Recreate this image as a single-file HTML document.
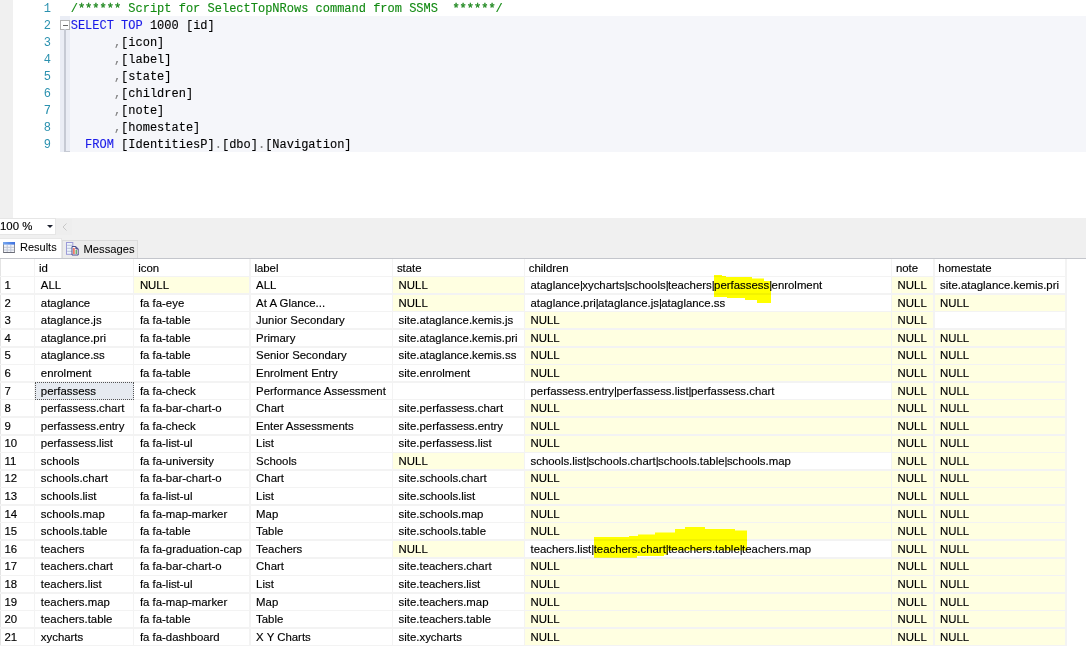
<!DOCTYPE html>
<html><head><meta charset="utf-8">
<style>
*{margin:0;padding:0;box-sizing:border-box}
html,body{width:1086px;height:649px;overflow:hidden;background:#fff;position:relative}
body{font-family:"Liberation Sans",sans-serif}
.a{position:absolute}
.code{position:absolute;font-family:"Liberation Mono",monospace;font-size:12px;white-space:pre;left:70.7px;line-height:17px;height:17px;-webkit-text-stroke:0.12px currentColor;color:#000}
.ln{position:absolute;font-family:"Liberation Mono",monospace;font-size:12px;color:#2b91af;width:20px;text-align:right;left:31px;line-height:17px}
.cm{color:#128a12}.kw{color:#1a1ae8}.gr{color:#808080}
.t{position:absolute;font-size:11.4px;white-space:pre;color:#000;line-height:17px;-webkit-text-stroke:0.15px #000}
.vl{position:absolute;width:1.6px;background:#f3f3f3}
.hl{position:absolute;height:1.6px;background:#f3f3f3}
.y{position:absolute;background:#ffffe1}
.p{letter-spacing:-0.6px}
</style></head><body>

<div class="a" style="left:0;top:0;width:13px;height:218px;background:#f0f0f0"></div>
<div class="a" style="left:60px;top:16px;width:1026px;height:136px;background:#f5f6fa"></div>
<div class="a" style="left:60px;top:16px;width:9.5px;height:136px;background:#eaedf5"></div>
<div class="a" style="left:60.2px;top:20px;width:9.4px;height:9.6px;border:1px solid #b4b4b4;background:#fff"></div>
<div class="a" style="left:62.5px;top:24.6px;width:5px;height:1.2px;background:#666"></div>
<div class="a" style="left:64px;top:29px;width:1.5px;height:122px;background:#c6cad4"></div>
<div class="a" style="left:64px;top:150.5px;width:5.5px;height:1.3px;background:#c6cad4"></div>
<div class="ln" style="top:1px">1</div>
<div class="ln" style="top:18px">2</div>
<div class="ln" style="top:35px">3</div>
<div class="ln" style="top:52px">4</div>
<div class="ln" style="top:69px">5</div>
<div class="ln" style="top:86px">6</div>
<div class="ln" style="top:103px">7</div>
<div class="ln" style="top:120px">8</div>
<div class="ln" style="top:137px">9</div>
<div class="code" style="top:1px"><span class="cm">/<span style="position:relative;top:-0.3px;-webkit-text-stroke:0.4px #2a8a2a">******</span> Script for SelectTopNRows command from SSMS  <span style="position:relative;top:-0.3px;-webkit-text-stroke:0.4px #2a8a2a">******</span>/</span></div>
<div class="code" style="top:18px"><span class="kw">SELECT</span> <span class="kw">TOP</span> 1000 [id]</div>
<div class="code" style="top:35px">      <span class="gr">,</span>[icon]</div>
<div class="code" style="top:52px">      <span class="gr">,</span>[label]</div>
<div class="code" style="top:69px">      <span class="gr">,</span>[state]</div>
<div class="code" style="top:86px">      <span class="gr">,</span>[children]</div>
<div class="code" style="top:103px">      <span class="gr">,</span>[note]</div>
<div class="code" style="top:120px">      <span class="gr">,</span>[homestate]</div>
<div class="code" style="top:137px">  <span class="kw">FROM</span> [IdentitiesP]<span class="gr">.</span>[dbo]<span class="gr">.</span>[Navigation]</div>
<div class="a" style="left:0;top:218px;width:1086px;height:40px;background:#f0f0f0"></div>
<div class="a" style="left:-1px;top:217.8px;width:57px;height:16.8px;background:#fff;border:1px solid #e6e6e6"></div>
<div class="t" style="left:0px;top:217.5px;font-size:11.4px">100 %</div>
<div class="a" style="left:46.6px;top:224.8px;width:0;height:0;border-left:3px solid transparent;border-right:3px solid transparent;border-top:3.2px solid #1e2230"></div>
<div class="a" style="left:56px;top:218.5px;width:16px;height:16px;background:#eeeeee"></div>
<svg class="a" style="left:60px;top:221px" width="10" height="12"><path d="M6.5 2.5 L3 6 L6.5 9.5" stroke="#c8c8c8" stroke-width="1" fill="none"/></svg>
<div class="a" style="left:0;top:237.8px;width:61.5px;height:20px;background:#fff;border-top:1px solid #e8e8e8;border-right:1px solid #e8e8e8"></div>
<div class="a" style="left:62px;top:240px;width:75.5px;height:18px;background:#ececec;border:1px solid #dcdcdc;border-bottom:none"></div>
<div class="t" style="left:20px;top:238.5px;font-size:11px;-webkit-text-stroke:0.05px #000">Results</div>
<div class="t" style="left:83.5px;top:240.5px;font-size:11.2px;-webkit-text-stroke:0.05px #000">Messages</div>
<svg class="a" style="left:3px;top:242px" width="12" height="11" viewBox="0 0 12 11">
<defs><linearGradient id="gb" x1="0" y1="0" x2="1" y2="0"><stop offset="0" stop-color="#78a8ee"/><stop offset="1" stop-color="#3b6fe0"/></linearGradient></defs>
<rect x="0.5" y="0.5" width="11" height="10" fill="#f2f4f8" stroke="#8a8c94"/>
<rect x="0" y="0" width="12" height="2.6" fill="url(#gb)"/>
<path d="M1 5.3H11M1 8H11M4.2 3V10M7.8 3V10" stroke="#c0c6d6" stroke-width="1"/>
<path d="M0.5 10.5H11.5" stroke="#6a6c78" stroke-width="1"/>
</svg>
<svg class="a" style="left:66px;top:242px" width="13" height="14" viewBox="0 0 13 14">
<rect x="0.5" y="0.5" width="6.3" height="11.8" fill="#eef4fc" stroke="#9c9ad8" stroke-width="1"/>
<path d="M1.2 3.3H6.2M1.2 6.3H6.2M1.2 9.3H6.2" stroke="#a8b4cc" stroke-width="0.8"/>
<path d="M6 4.5H9.8L12.2 7V13H6Z" fill="#fafafa" stroke="#4a4c8c" stroke-width="1"/>
<path d="M9.8 4.5V7H12.2" fill="#5a5a9a" stroke="#4a4c8c" stroke-width="0.8"/>
<rect x="7" y="6" width="1.8" height="6" fill="#f07a6a"/>
<rect x="9.5" y="8" width="1.5" height="4" fill="#6ab070"/>
</svg>
<div class="a" style="left:0;top:257.6px;width:1086px;height:1.4px;background:#c4c6cc"></div>
<div class="y" style="left:133.7px;top:276.50px;width:116.20px;height:17.58px"></div>
<div class="y" style="left:392.4px;top:276.50px;width:131.90px;height:17.58px"></div>
<div class="y" style="left:891.4px;top:276.50px;width:42.40px;height:17.58px"></div>
<div class="y" style="left:392.4px;top:294.08px;width:131.90px;height:17.58px"></div>
<div class="y" style="left:891.4px;top:294.08px;width:42.40px;height:17.58px"></div>
<div class="y" style="left:933.8px;top:294.08px;width:132.20px;height:17.58px"></div>
<div class="y" style="left:524.3px;top:311.66px;width:367.10px;height:17.58px"></div>
<div class="y" style="left:891.4px;top:311.66px;width:42.40px;height:17.58px"></div>
<div class="y" style="left:524.3px;top:329.24px;width:367.10px;height:17.58px"></div>
<div class="y" style="left:891.4px;top:329.24px;width:42.40px;height:17.58px"></div>
<div class="y" style="left:933.8px;top:329.24px;width:132.20px;height:17.58px"></div>
<div class="y" style="left:524.3px;top:346.82px;width:367.10px;height:17.58px"></div>
<div class="y" style="left:891.4px;top:346.82px;width:42.40px;height:17.58px"></div>
<div class="y" style="left:933.8px;top:346.82px;width:132.20px;height:17.58px"></div>
<div class="y" style="left:524.3px;top:364.40px;width:367.10px;height:17.58px"></div>
<div class="y" style="left:891.4px;top:364.40px;width:42.40px;height:17.58px"></div>
<div class="y" style="left:933.8px;top:364.40px;width:132.20px;height:17.58px"></div>
<div class="y" style="left:891.4px;top:381.98px;width:42.40px;height:17.58px"></div>
<div class="y" style="left:933.8px;top:381.98px;width:132.20px;height:17.58px"></div>
<div class="y" style="left:524.3px;top:399.56px;width:367.10px;height:17.58px"></div>
<div class="y" style="left:891.4px;top:399.56px;width:42.40px;height:17.58px"></div>
<div class="y" style="left:933.8px;top:399.56px;width:132.20px;height:17.58px"></div>
<div class="y" style="left:524.3px;top:417.14px;width:367.10px;height:17.58px"></div>
<div class="y" style="left:891.4px;top:417.14px;width:42.40px;height:17.58px"></div>
<div class="y" style="left:933.8px;top:417.14px;width:132.20px;height:17.58px"></div>
<div class="y" style="left:524.3px;top:434.72px;width:367.10px;height:17.58px"></div>
<div class="y" style="left:891.4px;top:434.72px;width:42.40px;height:17.58px"></div>
<div class="y" style="left:933.8px;top:434.72px;width:132.20px;height:17.58px"></div>
<div class="y" style="left:392.4px;top:452.30px;width:131.90px;height:17.58px"></div>
<div class="y" style="left:891.4px;top:452.30px;width:42.40px;height:17.58px"></div>
<div class="y" style="left:933.8px;top:452.30px;width:132.20px;height:17.58px"></div>
<div class="y" style="left:524.3px;top:469.88px;width:367.10px;height:17.58px"></div>
<div class="y" style="left:891.4px;top:469.88px;width:42.40px;height:17.58px"></div>
<div class="y" style="left:933.8px;top:469.88px;width:132.20px;height:17.58px"></div>
<div class="y" style="left:524.3px;top:487.46px;width:367.10px;height:17.58px"></div>
<div class="y" style="left:891.4px;top:487.46px;width:42.40px;height:17.58px"></div>
<div class="y" style="left:933.8px;top:487.46px;width:132.20px;height:17.58px"></div>
<div class="y" style="left:524.3px;top:505.04px;width:367.10px;height:17.58px"></div>
<div class="y" style="left:891.4px;top:505.04px;width:42.40px;height:17.58px"></div>
<div class="y" style="left:933.8px;top:505.04px;width:132.20px;height:17.58px"></div>
<div class="y" style="left:524.3px;top:522.62px;width:367.10px;height:17.58px"></div>
<div class="y" style="left:891.4px;top:522.62px;width:42.40px;height:17.58px"></div>
<div class="y" style="left:933.8px;top:522.62px;width:132.20px;height:17.58px"></div>
<div class="y" style="left:392.4px;top:540.20px;width:131.90px;height:17.58px"></div>
<div class="y" style="left:891.4px;top:540.20px;width:42.40px;height:17.58px"></div>
<div class="y" style="left:933.8px;top:540.20px;width:132.20px;height:17.58px"></div>
<div class="y" style="left:524.3px;top:557.78px;width:367.10px;height:17.58px"></div>
<div class="y" style="left:891.4px;top:557.78px;width:42.40px;height:17.58px"></div>
<div class="y" style="left:933.8px;top:557.78px;width:132.20px;height:17.58px"></div>
<div class="y" style="left:524.3px;top:575.36px;width:367.10px;height:17.58px"></div>
<div class="y" style="left:891.4px;top:575.36px;width:42.40px;height:17.58px"></div>
<div class="y" style="left:933.8px;top:575.36px;width:132.20px;height:17.58px"></div>
<div class="y" style="left:524.3px;top:592.94px;width:367.10px;height:17.58px"></div>
<div class="y" style="left:891.4px;top:592.94px;width:42.40px;height:17.58px"></div>
<div class="y" style="left:933.8px;top:592.94px;width:132.20px;height:17.58px"></div>
<div class="y" style="left:524.3px;top:610.52px;width:367.10px;height:17.58px"></div>
<div class="y" style="left:891.4px;top:610.52px;width:42.40px;height:17.58px"></div>
<div class="y" style="left:933.8px;top:610.52px;width:132.20px;height:17.58px"></div>
<div class="y" style="left:524.3px;top:628.10px;width:367.10px;height:17.58px"></div>
<div class="y" style="left:891.4px;top:628.10px;width:42.40px;height:17.58px"></div>
<div class="y" style="left:933.8px;top:628.10px;width:132.20px;height:17.58px"></div>
<div class="vl" style="left:33.80px;top:259px;height:386.68px"></div>
<div class="vl" style="left:132.90px;top:259px;height:386.68px"></div>
<div class="vl" style="left:249.10px;top:259px;height:386.68px"></div>
<div class="vl" style="left:391.60px;top:259px;height:386.68px"></div>
<div class="vl" style="left:523.50px;top:259px;height:386.68px"></div>
<div class="vl" style="left:890.60px;top:259px;height:386.68px"></div>
<div class="vl" style="left:933.00px;top:259px;height:386.68px"></div>
<div class="vl" style="left:1065.20px;top:259px;height:386.68px"></div>
<div class="a" style="left:0;top:259px;width:1.2px;height:386.68px;background:#e4e4e4"></div>
<div class="hl" style="left:0;top:275.70px;width:1066px"></div>
<div class="hl" style="left:0;top:293.28px;width:1066px"></div>
<div class="hl" style="left:0;top:310.86px;width:1066px"></div>
<div class="hl" style="left:0;top:328.44px;width:1066px"></div>
<div class="hl" style="left:0;top:346.02px;width:1066px"></div>
<div class="hl" style="left:0;top:363.60px;width:1066px"></div>
<div class="hl" style="left:0;top:381.18px;width:1066px"></div>
<div class="hl" style="left:0;top:398.76px;width:1066px"></div>
<div class="hl" style="left:0;top:416.34px;width:1066px"></div>
<div class="hl" style="left:0;top:433.92px;width:1066px"></div>
<div class="hl" style="left:0;top:451.50px;width:1066px"></div>
<div class="hl" style="left:0;top:469.08px;width:1066px"></div>
<div class="hl" style="left:0;top:486.66px;width:1066px"></div>
<div class="hl" style="left:0;top:504.24px;width:1066px"></div>
<div class="hl" style="left:0;top:521.82px;width:1066px"></div>
<div class="hl" style="left:0;top:539.40px;width:1066px"></div>
<div class="hl" style="left:0;top:556.98px;width:1066px"></div>
<div class="hl" style="left:0;top:574.56px;width:1066px"></div>
<div class="hl" style="left:0;top:592.14px;width:1066px"></div>
<div class="hl" style="left:0;top:609.72px;width:1066px"></div>
<div class="hl" style="left:0;top:627.30px;width:1066px"></div>
<div class="hl" style="left:0;top:644.88px;width:1066px"></div>
<div class="a" style="left:34.5px;top:382.28px;width:99.5px;height:17.98px;background:#e6eaf0;border:1px dotted #555"></div>
<svg class="a" style="left:0;top:0;mix-blend-mode:multiply" width="1086" height="649">
<path fill="#ffff00" d="M714 275 L722 275 L722 276 L726 276 L726 277 L752 277 L752 278.5 L764 278.5 L764 281 L771 281 L771 303 L757 303 L757 300 L745 300 L745 298 L727 298 L727 297 L714 297 Z"/>
<path fill="#ffff00" d="M594 537 L629 537 L629 536 L638 536 L638 534.4 L655 534.4 L655 532.5 L675 532.5 L675 529 L685 529 L685 527 L705 527 L705 529 L735 529 L735 530.5 L747 530.5 L747 550.5 L668 550.5 L668 554.6 L664 554.6 L664 556 L637 556 L637 557.8 L594 557.8 Z"/>
</svg>
<div class="t" style="left:39.1px;top:259.5px">id</div>
<div class="t" style="left:138.2px;top:259.5px">icon</div>
<div class="t" style="left:254.4px;top:259.5px">label</div>
<div class="t" style="left:396.9px;top:259.5px">state</div>
<div class="t" style="left:528.8px;top:259.5px">children</div>
<div class="t" style="left:895.9px;top:259.5px">note</div>
<div class="t" style="left:938.3px;top:259.5px">homestate</div>
<div class="t" style="left:4.5px;top:277.10px">1</div>
<div class="t" style="left:40.80px;top:277.10px">ALL</div>
<div class="t" style="left:139.90px;top:277.10px">NULL</div>
<div class="t" style="left:256.10px;top:277.10px">ALL</div>
<div class="t" style="left:398.60px;top:277.10px">NULL</div>
<div class="t" style="left:530.50px;top:277.10px">ataglance<span class="p">|</span>xycharts<span class="p">|</span>schools<span class="p">|</span>teachers<span class="p">|</span>perfassess<span class="p">|</span>enrolment</div>
<div class="t" style="left:897.60px;top:277.10px">NULL</div>
<div class="t" style="left:940.00px;top:277.10px">site.ataglance.kemis.pri</div>
<div class="t" style="left:4.5px;top:294.68px">2</div>
<div class="t" style="left:40.80px;top:294.68px">ataglance</div>
<div class="t" style="left:139.90px;top:294.68px">fa fa-eye</div>
<div class="t" style="left:256.10px;top:294.68px">At A Glance...</div>
<div class="t" style="left:398.60px;top:294.68px">NULL</div>
<div class="t" style="left:530.50px;top:294.68px">ataglance.pri<span class="p">|</span>ataglance.js<span class="p">|</span>ataglance.ss</div>
<div class="t" style="left:897.60px;top:294.68px">NULL</div>
<div class="t" style="left:940.00px;top:294.68px">NULL</div>
<div class="t" style="left:4.5px;top:312.26px">3</div>
<div class="t" style="left:40.80px;top:312.26px">ataglance.js</div>
<div class="t" style="left:139.90px;top:312.26px">fa fa-table</div>
<div class="t" style="left:256.10px;top:312.26px">Junior Secondary</div>
<div class="t" style="left:398.60px;top:312.26px">site.ataglance.kemis.js</div>
<div class="t" style="left:530.50px;top:312.26px">NULL</div>
<div class="t" style="left:897.60px;top:312.26px">NULL</div>
<div class="t" style="left:4.5px;top:329.84px">4</div>
<div class="t" style="left:40.80px;top:329.84px">ataglance.pri</div>
<div class="t" style="left:139.90px;top:329.84px">fa fa-table</div>
<div class="t" style="left:256.10px;top:329.84px">Primary</div>
<div class="t" style="left:398.60px;top:329.84px">site.ataglance.kemis.pri</div>
<div class="t" style="left:530.50px;top:329.84px">NULL</div>
<div class="t" style="left:897.60px;top:329.84px">NULL</div>
<div class="t" style="left:940.00px;top:329.84px">NULL</div>
<div class="t" style="left:4.5px;top:347.42px">5</div>
<div class="t" style="left:40.80px;top:347.42px">ataglance.ss</div>
<div class="t" style="left:139.90px;top:347.42px">fa fa-table</div>
<div class="t" style="left:256.10px;top:347.42px">Senior Secondary</div>
<div class="t" style="left:398.60px;top:347.42px">site.ataglance.kemis.ss</div>
<div class="t" style="left:530.50px;top:347.42px">NULL</div>
<div class="t" style="left:897.60px;top:347.42px">NULL</div>
<div class="t" style="left:940.00px;top:347.42px">NULL</div>
<div class="t" style="left:4.5px;top:365.00px">6</div>
<div class="t" style="left:40.80px;top:365.00px">enrolment</div>
<div class="t" style="left:139.90px;top:365.00px">fa fa-table</div>
<div class="t" style="left:256.10px;top:365.00px">Enrolment Entry</div>
<div class="t" style="left:398.60px;top:365.00px">site.enrolment</div>
<div class="t" style="left:530.50px;top:365.00px">NULL</div>
<div class="t" style="left:897.60px;top:365.00px">NULL</div>
<div class="t" style="left:940.00px;top:365.00px">NULL</div>
<div class="t" style="left:4.5px;top:382.58px">7</div>
<div class="t" style="left:40.80px;top:382.58px">perfassess</div>
<div class="t" style="left:139.90px;top:382.58px">fa fa-check</div>
<div class="t" style="left:256.10px;top:382.58px">Performance Assessment</div>
<div class="t" style="left:530.50px;top:382.58px">perfassess.entry<span class="p">|</span>perfassess.list<span class="p">|</span>perfassess.chart</div>
<div class="t" style="left:897.60px;top:382.58px">NULL</div>
<div class="t" style="left:940.00px;top:382.58px">NULL</div>
<div class="t" style="left:4.5px;top:400.16px">8</div>
<div class="t" style="left:40.80px;top:400.16px">perfassess.chart</div>
<div class="t" style="left:139.90px;top:400.16px">fa fa-bar-chart-o</div>
<div class="t" style="left:256.10px;top:400.16px">Chart</div>
<div class="t" style="left:398.60px;top:400.16px">site.perfassess.chart</div>
<div class="t" style="left:530.50px;top:400.16px">NULL</div>
<div class="t" style="left:897.60px;top:400.16px">NULL</div>
<div class="t" style="left:940.00px;top:400.16px">NULL</div>
<div class="t" style="left:4.5px;top:417.74px">9</div>
<div class="t" style="left:40.80px;top:417.74px">perfassess.entry</div>
<div class="t" style="left:139.90px;top:417.74px">fa fa-check</div>
<div class="t" style="left:256.10px;top:417.74px">Enter Assessments</div>
<div class="t" style="left:398.60px;top:417.74px">site.perfassess.entry</div>
<div class="t" style="left:530.50px;top:417.74px">NULL</div>
<div class="t" style="left:897.60px;top:417.74px">NULL</div>
<div class="t" style="left:940.00px;top:417.74px">NULL</div>
<div class="t" style="left:4.5px;top:435.32px">10</div>
<div class="t" style="left:40.80px;top:435.32px">perfassess.list</div>
<div class="t" style="left:139.90px;top:435.32px">fa fa-list-ul</div>
<div class="t" style="left:256.10px;top:435.32px">List</div>
<div class="t" style="left:398.60px;top:435.32px">site.perfassess.list</div>
<div class="t" style="left:530.50px;top:435.32px">NULL</div>
<div class="t" style="left:897.60px;top:435.32px">NULL</div>
<div class="t" style="left:940.00px;top:435.32px">NULL</div>
<div class="t" style="left:4.5px;top:452.90px">11</div>
<div class="t" style="left:40.80px;top:452.90px">schools</div>
<div class="t" style="left:139.90px;top:452.90px">fa fa-university</div>
<div class="t" style="left:256.10px;top:452.90px">Schools</div>
<div class="t" style="left:398.60px;top:452.90px">NULL</div>
<div class="t" style="left:530.50px;top:452.90px">schools.list<span class="p">|</span>schools.chart<span class="p">|</span>schools.table<span class="p">|</span>schools.map</div>
<div class="t" style="left:897.60px;top:452.90px">NULL</div>
<div class="t" style="left:940.00px;top:452.90px">NULL</div>
<div class="t" style="left:4.5px;top:470.48px">12</div>
<div class="t" style="left:40.80px;top:470.48px">schools.chart</div>
<div class="t" style="left:139.90px;top:470.48px">fa fa-bar-chart-o</div>
<div class="t" style="left:256.10px;top:470.48px">Chart</div>
<div class="t" style="left:398.60px;top:470.48px">site.schools.chart</div>
<div class="t" style="left:530.50px;top:470.48px">NULL</div>
<div class="t" style="left:897.60px;top:470.48px">NULL</div>
<div class="t" style="left:940.00px;top:470.48px">NULL</div>
<div class="t" style="left:4.5px;top:488.06px">13</div>
<div class="t" style="left:40.80px;top:488.06px">schools.list</div>
<div class="t" style="left:139.90px;top:488.06px">fa fa-list-ul</div>
<div class="t" style="left:256.10px;top:488.06px">List</div>
<div class="t" style="left:398.60px;top:488.06px">site.schools.list</div>
<div class="t" style="left:530.50px;top:488.06px">NULL</div>
<div class="t" style="left:897.60px;top:488.06px">NULL</div>
<div class="t" style="left:940.00px;top:488.06px">NULL</div>
<div class="t" style="left:4.5px;top:505.64px">14</div>
<div class="t" style="left:40.80px;top:505.64px">schools.map</div>
<div class="t" style="left:139.90px;top:505.64px">fa fa-map-marker</div>
<div class="t" style="left:256.10px;top:505.64px">Map</div>
<div class="t" style="left:398.60px;top:505.64px">site.schools.map</div>
<div class="t" style="left:530.50px;top:505.64px">NULL</div>
<div class="t" style="left:897.60px;top:505.64px">NULL</div>
<div class="t" style="left:940.00px;top:505.64px">NULL</div>
<div class="t" style="left:4.5px;top:523.22px">15</div>
<div class="t" style="left:40.80px;top:523.22px">schools.table</div>
<div class="t" style="left:139.90px;top:523.22px">fa fa-table</div>
<div class="t" style="left:256.10px;top:523.22px">Table</div>
<div class="t" style="left:398.60px;top:523.22px">site.schools.table</div>
<div class="t" style="left:530.50px;top:523.22px">NULL</div>
<div class="t" style="left:897.60px;top:523.22px">NULL</div>
<div class="t" style="left:940.00px;top:523.22px">NULL</div>
<div class="t" style="left:4.5px;top:540.80px">16</div>
<div class="t" style="left:40.80px;top:540.80px">teachers</div>
<div class="t" style="left:139.90px;top:540.80px">fa fa-graduation-cap</div>
<div class="t" style="left:256.10px;top:540.80px">Teachers</div>
<div class="t" style="left:398.60px;top:540.80px">NULL</div>
<div class="t" style="left:530.50px;top:540.80px">teachers.list<span class="p">|</span>teachers.chart<span class="p">|</span>teachers.table<span class="p">|</span>teachers.map</div>
<div class="t" style="left:897.60px;top:540.80px">NULL</div>
<div class="t" style="left:940.00px;top:540.80px">NULL</div>
<div class="t" style="left:4.5px;top:558.38px">17</div>
<div class="t" style="left:40.80px;top:558.38px">teachers.chart</div>
<div class="t" style="left:139.90px;top:558.38px">fa fa-bar-chart-o</div>
<div class="t" style="left:256.10px;top:558.38px">Chart</div>
<div class="t" style="left:398.60px;top:558.38px">site.teachers.chart</div>
<div class="t" style="left:530.50px;top:558.38px">NULL</div>
<div class="t" style="left:897.60px;top:558.38px">NULL</div>
<div class="t" style="left:940.00px;top:558.38px">NULL</div>
<div class="t" style="left:4.5px;top:575.96px">18</div>
<div class="t" style="left:40.80px;top:575.96px">teachers.list</div>
<div class="t" style="left:139.90px;top:575.96px">fa fa-list-ul</div>
<div class="t" style="left:256.10px;top:575.96px">List</div>
<div class="t" style="left:398.60px;top:575.96px">site.teachers.list</div>
<div class="t" style="left:530.50px;top:575.96px">NULL</div>
<div class="t" style="left:897.60px;top:575.96px">NULL</div>
<div class="t" style="left:940.00px;top:575.96px">NULL</div>
<div class="t" style="left:4.5px;top:593.54px">19</div>
<div class="t" style="left:40.80px;top:593.54px">teachers.map</div>
<div class="t" style="left:139.90px;top:593.54px">fa fa-map-marker</div>
<div class="t" style="left:256.10px;top:593.54px">Map</div>
<div class="t" style="left:398.60px;top:593.54px">site.teachers.map</div>
<div class="t" style="left:530.50px;top:593.54px">NULL</div>
<div class="t" style="left:897.60px;top:593.54px">NULL</div>
<div class="t" style="left:940.00px;top:593.54px">NULL</div>
<div class="t" style="left:4.5px;top:611.12px">20</div>
<div class="t" style="left:40.80px;top:611.12px">teachers.table</div>
<div class="t" style="left:139.90px;top:611.12px">fa fa-table</div>
<div class="t" style="left:256.10px;top:611.12px">Table</div>
<div class="t" style="left:398.60px;top:611.12px">site.teachers.table</div>
<div class="t" style="left:530.50px;top:611.12px">NULL</div>
<div class="t" style="left:897.60px;top:611.12px">NULL</div>
<div class="t" style="left:940.00px;top:611.12px">NULL</div>
<div class="t" style="left:4.5px;top:628.70px">21</div>
<div class="t" style="left:40.80px;top:628.70px">xycharts</div>
<div class="t" style="left:139.90px;top:628.70px">fa fa-dashboard</div>
<div class="t" style="left:256.10px;top:628.70px">X Y Charts</div>
<div class="t" style="left:398.60px;top:628.70px">site.xycharts</div>
<div class="t" style="left:530.50px;top:628.70px">NULL</div>
<div class="t" style="left:897.60px;top:628.70px">NULL</div>
<div class="t" style="left:940.00px;top:628.70px">NULL</div>
</body></html>
